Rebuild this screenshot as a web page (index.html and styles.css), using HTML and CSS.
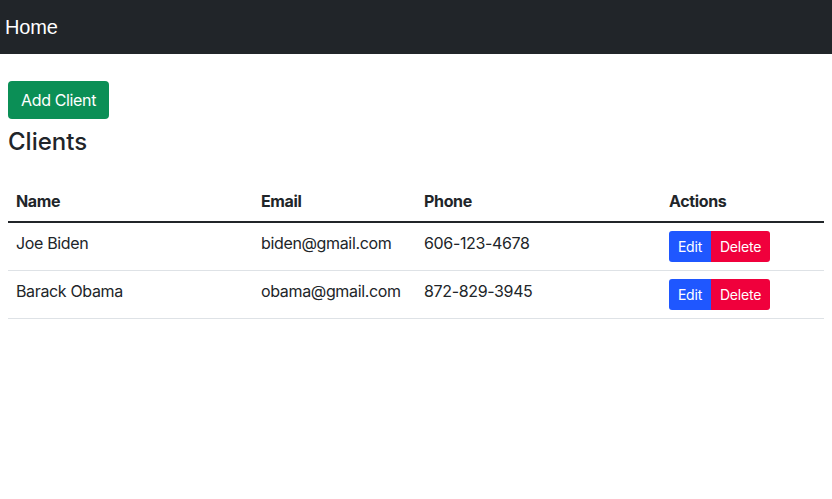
FILE: index.html
```html
<!DOCTYPE html>
<html>
<head>
<meta charset="utf-8">
<link rel="stylesheet" href="styles.css">
</head>
<body>
<nav class="navbar"><span class="brand">Home</span></nav>
<main class="content">
  <button class="btn btn-success">Add Client</button>
  <h3 class="title">Clients</h3>
  <table class="table">
    <thead>
      <tr><th class="c1">Name</th><th class="c2">Email</th><th class="c3">Phone</th><th class="c4">Actions</th></tr>
    </thead>
    <tbody>
      <tr><td>Joe Biden</td><td>biden@gmail.com</td><td>606-123-4678</td><td><div class="group"><button class="btn-sm edit">Edit</button><button class="btn-sm del">Delete</button></div></td></tr>
      <tr><td>Barack Obama</td><td>obama@gmail.com</td><td>872-829-3945</td><td><div class="group"><button class="btn-sm edit">Edit</button><button class="btn-sm del">Delete</button></div></td></tr>
    </tbody>
  </table>
</main>
</body>
</html>
```
FILE: styles.css
```css
* { box-sizing: border-box; }
body { margin: 0; font-family: Inter, "Noto Sans", sans-serif; color: #212529; font-size: 16px; line-height: 24px; letter-spacing: -0.35px; background: #fff; }
.navbar { background: #212529; height: 54px; display: flex; align-items: center; padding: 0 5px; }
.brand { color: #fff; font-family: "Liberation Sans", Arial, sans-serif; font-size: 20px; line-height: 30px; letter-spacing: -0.2px; }
.content { padding: 27px 8px 0; }
.btn { border: none; border-radius: 4px; font-family: Inter, sans-serif; font-size: 16px; line-height: 24px; letter-spacing: -0.35px; padding: 7px 13px 7px 13px; color: #fff; display: block; white-space: nowrap; }
.btn-success { background: #0b8f56; height: 38px; width: 101px; }
.title { font-size: 24px; font-weight: 500; line-height: 29px; margin: 8px 0 25px; letter-spacing: 0; }
.table { width: 816px; border-collapse: collapse; }
.table th { text-align: left; font-weight: 700; padding: 8px 8px 8px; border-bottom: 2px solid #212529; }
.table td { padding: 8px; border-bottom: 1px solid #dee2e6; vertical-align: top; }
.c1 { width: 245px; } .c2 { width: 163px; } .c3 { width: 245px; } .c4 { width: 163px; }
.group { display: flex; }
.btn-sm { border: none; color: #fff; font-family: Inter, sans-serif; font-size: 14px; line-height: 21px; letter-spacing: -0.2px; padding: 5px 8px; height: 31px; white-space: nowrap; }
.edit { background: #1f57ff; border-radius: 3px 0 0 3px; width: 42px; }
.del { background: #f0003c; border-radius: 0 3px 3px 0; width: 59px; }
```
